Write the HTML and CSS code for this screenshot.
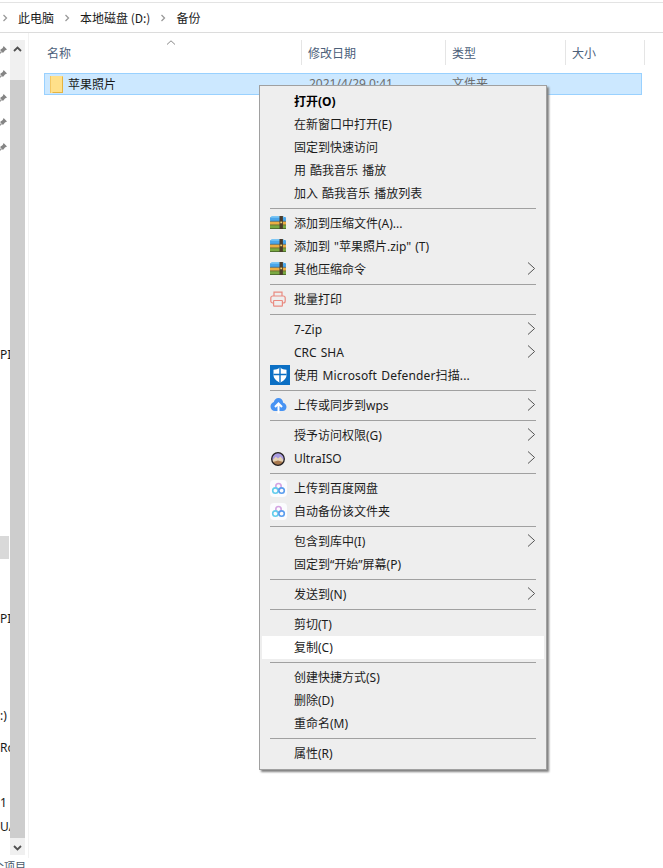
FILE: index.html
```html
<!DOCTYPE html>
<html lang="zh-CN">
<head>
<meta charset="utf-8">
<title>备份</title>
<link rel="stylesheet" href="styles.css">
</head>
<body>
<svg class="defs" width="0" height="0" aria-hidden="true">
  <defs>
    <symbol id="pin" viewBox="0 0 8 8"><path d="M5 0 8 3 6.2 3.9 4.4 6.2 1.8 3.6 4.2 1.8Z" fill="#858585"/><path d="M3.2 4.8 0.4 7.6" stroke="#9a9a9a" stroke-width="1.3" fill="none"/></symbol>
    <symbol id="crumb" viewBox="0 0 6 8"><path d="M1.5 1 4.5 4 1.5 7" fill="none" stroke="#9a9a9a" stroke-width="1.3"/></symbol>
    <symbol id="more" viewBox="0 0 9 13"><path d="M1 0.5 7.6 6.5 1 12.5" fill="none" stroke="#555" stroke-width="1"/></symbol>
    <symbol id="rar" viewBox="0 0 16 14" preserveAspectRatio="none">
      <rect x="0" y="1" width="16" height="4.5" rx="1" fill="#4aa6ea"/>
      <rect x="1" y="0" width="13" height="2" rx="1" fill="#7cc6f4"/>
      <rect x="0" y="5.5" width="16" height="4" fill="#ecae42"/>
      <rect x="0" y="9.5" width="16" height="4" fill="#7aa942"/>
      <rect x="0" y="5.2" width="16" height="0.8" fill="#2c5c80"/>
      <rect x="0" y="9.2" width="16" height="0.8" fill="#6b5a20"/>
      <rect x="0" y="13" width="16" height="1" fill="#4a6a28"/>
      <rect x="9.5" y="0" width="3.4" height="14" fill="#4a3b2a"/>
      <rect x="10.3" y="6" width="1.8" height="1.8" fill="#f0d070"/>
    </symbol>
    <symbol id="baidu" viewBox="0 0 17 17">
      <rect width="17" height="17" rx="4" fill="#fbfcfe"/>
      <circle cx="8.5" cy="6.2" r="2.7" fill="none" stroke="#d3a4e2" stroke-width="1.6"/>
      <circle cx="5.4" cy="10.6" r="2.7" fill="none" stroke="#62cdec" stroke-width="1.6"/>
      <circle cx="11.6" cy="10.6" r="2.7" fill="none" stroke="#5a9dee" stroke-width="1.6"/>
    </symbol>
  </defs>
</svg>

<header class="address">
  <svg class="crumb-sep"><use href="#crumb"/></svg>
  <span class="crumb first">此电脑</span>
  <svg class="crumb-sep"><use href="#crumb"/></svg>
  <span class="crumb">本地磁盘 (D:)</span>
  <svg class="crumb-sep"><use href="#crumb"/></svg>
  <span class="crumb">备份</span>
</header>

<main class="main">
  <nav class="nav">
    <div class="nav-row"><svg class="pin"><use href="#pin"/></svg></div>
    <div class="nav-row"><svg class="pin"><use href="#pin"/></svg></div>
    <div class="nav-row"><svg class="pin"><use href="#pin"/></svg></div>
    <div class="nav-row"><svg class="pin"><use href="#pin"/></svg></div>
    <div class="nav-row"><svg class="pin"><use href="#pin"/></svg></div>
    <div class="nav-row label after-pins">PI</div>
    <div class="nav-row selected after-first"></div>
    <div class="nav-row label after-selected">PI</div>
    <div class="nav-row label after-second">:)</div>
    <div class="nav-row label after-drive">Ro</div>
    <div class="nav-row label after-ro">1</div>
    <div class="nav-row label">UA</div>
  </nav>
  <div class="scrollbar">
    <div class="scroll-up">
      <svg width="9" height="6" viewBox="0 0 9 6"><path d="M1 5 4.5 1.5 8 5" fill="none" stroke="#505050" stroke-width="1.8"/></svg>
    </div>
    <div class="scroll-thumb"></div>
    <div class="scroll-down">
      <svg width="9" height="6" viewBox="0 0 9 6"><path d="M1 1 4.5 4.5 8 1" fill="none" stroke="#505050" stroke-width="1.8"/></svg>
    </div>
  </div>

  <section class="list">
    <div class="list-head">
      <div class="head-cell name">名称
        <svg class="sort" width="10" height="5" viewBox="0 0 10 5"><path d="M1 4.5 5 .8 9 4.5" fill="none" stroke="#8a8a8a" stroke-width="1"/></svg>
      </div>
      <div class="head-cell">修改日期</div>
      <div class="head-cell">类型</div>
      <div class="head-cell">大小</div>
    </div>
    <div class="file-row">
      <div class="file-name">
        <svg class="folder" width="13" height="17" viewBox="0 0 13 17">
          <rect x="0" y="0" width="13" height="17" fill="#ffe08a"/>
          <rect x="0" y="0" width="1" height="17" fill="#f3c763"/>
          <path d="M12 1 13 0V17H2L3 16H12Z" fill="#e5b341"/>
        </svg>
        苹果照片
      </div>
      <div class="file-meta date">2021/4/29 0:41</div>
      <div class="file-meta">文件夹</div>
    </div>
  </section>
</main>

<footer class="status">个项目</footer>

<div class="menu">
  <div class="item strong">打开(O)</div>
  <div class="item">在新窗口中打开(E)</div>
  <div class="item">固定到快速访问</div>
  <div class="item">用 酷我音乐 播放</div>
  <div class="item">加入 酷我音乐 播放列表</div>
  <div class="sep"></div>
  <div class="item"><svg class="icon rar"><use href="#rar"/></svg>添加到压缩文件(A)...</div>
  <div class="item"><svg class="icon rar"><use href="#rar"/></svg>添加到 "苹果照片.zip" (T)</div>
  <div class="item"><svg class="icon rar"><use href="#rar"/></svg>其他压缩命令<svg class="more"><use href="#more"/></svg></div>
  <div class="sep"></div>
  <div class="item">
    <svg class="icon print" viewBox="0 0 16 16" fill="none" stroke="#e98a80" stroke-width="1.2">
      <path d="M4 5V1.2H12V5"/>
      <rect x="0.8" y="5" width="14.4" height="7" rx="2"/>
      <rect x="3.6" y="9.5" width="8.8" height="5.6" rx="0.6" fill="#eeeeee"/>
    </svg>批量打印</div>
  <div class="sep"></div>
  <div class="item">7-Zip<svg class="more"><use href="#more"/></svg></div>
  <div class="item">CRC SHA<svg class="more"><use href="#more"/></svg></div>
  <div class="item">
    <svg class="icon shield" viewBox="0 0 20 20">
      <rect width="20" height="20" fill="#0b6fc4"/>
      <path d="M10 2.5C8 4 6 4.6 3.5 4.8V10C3.5 13.5 6.5 16 10 17.8 13.5 16 16.5 13.5 16.5 10V4.8C14 4.6 12 4 10 2.5Z" fill="#fff"/>
      <path d="M10 2.5V17.8M3.5 9.5H16.5" stroke="#0b6fc4" stroke-width="1.4"/>
    </svg><span class="wide">使用 Microsoft Defender扫描...</span></div>
  <div class="sep"></div>
  <div class="item">
    <svg class="icon cloud" viewBox="0 0 17 17">
      <path d="M8.5 1C6 1 4.2 2.8 3.8 5.1 1.8 5.7 .5 7.5 .5 9.5 .5 12 2.5 14 5 14H12.5C14.8 14 16.5 12.1 16.5 9.9 16.5 7.8 15 6.1 13.2 5.7 12.9 3 10.9 1 8.5 1Z" fill="#4793f3"/>
      <path d="M8.5 16.5V7.5M5 10 8.5 6.5 12 10" fill="none" stroke="#fff" stroke-width="2"/>
    </svg>上传或同步到wps<svg class="more"><use href="#more"/></svg></div>
  <div class="sep"></div>
  <div class="item">授予访问权限(G)<svg class="more"><use href="#more"/></svg></div>
  <div class="item">
    <svg class="icon iso" viewBox="0 0 16 16">
      <circle cx="8" cy="8" r="6.3" fill="#a99ce0"/>
      <path d="M2.2 9.5 5.8 5.8 8 7.4 10.5 5.4 13.8 9.5C13 12.4 10.8 14.3 8 14.3 5.2 14.3 3 12.4 2.2 9.5Z" fill="#e6d2b4"/>
      <path d="M3 11 8 9.6 13 11C12 13 10.2 14.3 8 14.3 5.8 14.3 4 13 3 11Z" fill="#a9794e"/>
      <circle cx="8" cy="8" r="6.3" fill="none" stroke="#231f1f" stroke-width="1.3"/>
    </svg>UltraISO<svg class="more"><use href="#more"/></svg></div>
  <div class="sep"></div>
  <div class="item"><svg class="icon baidu"><use href="#baidu"/></svg>上传到百度网盘</div>
  <div class="item"><svg class="icon baidu"><use href="#baidu"/></svg>自动备份该文件夹</div>
  <div class="sep"></div>
  <div class="item">包含到库中(I)<svg class="more"><use href="#more"/></svg></div>
  <div class="item">固定到“开始”屏幕(P)</div>
  <div class="sep"></div>
  <div class="item">发送到(N)<svg class="more"><use href="#more"/></svg></div>
  <div class="sep"></div>
  <div class="item">剪切(T)</div>
  <div class="item active">复制(C)</div>
  <div class="sep"></div>
  <div class="item">创建快捷方式(S)</div>
  <div class="item">删除(D)</div>
  <div class="item">重命名(M)</div>
  <div class="sep"></div>
  <div class="item">属性(R)</div>
</div>
</body>
</html>
```
FILE: styles.css
```css
* { box-sizing: border-box; }

html, body {
  margin: 0;
  height: 868px;
  overflow: hidden;
  background: #fff;
  color: #1a1a1a;
  font: 12px/16px "Noto Sans", "Noto Sans CJK SC", sans-serif;
}

body {
  position: relative;
  display: flex;
  flex-direction: column;
}

.defs { position: absolute; }

/* address bar */
.address {
  flex: none;
  display: flex;
  align-items: center;
  height: 31px;
  margin-top: 2px;
  padding-left: 2px;
  border-top: 1px solid #e3e3e3;
  border-bottom: 1px solid #dcdcdc;
}

.crumb { margin: 0 10px; font-family: "Noto Sans CJK SC", "Noto Sans", sans-serif; }
.crumb-sep { width: 6px; height: 8px; flex: none; }

/* main area */
.main {
  flex: none;
  display: flex;
  height: 825px;
}

.nav {
  flex: none;
  width: 10px;
  padding-top: 5px;
  overflow: hidden;
  white-space: nowrap;
}

.nav-row {
  display: flex;
  align-items: center;
  height: 24.25px;
}

.pin { width: 9px; height: 9px; margin-left: -2px; }

.label { height: 24px; }
.selected { height: 23px; margin-right: 1px; background: #d9d9d9; }

.after-pins { margin-top: 184px; }
.after-first { margin-top: 169px; }
.after-selected { margin-top: 48px; }
.after-second { margin-top: 73px; }
.after-drive { margin-top: 8px; }
.after-ro { margin-top: 31px; }

.scrollbar {
  flex: none;
  display: flex;
  flex-direction: column;
  width: 15px;
  margin: 7px 3px 3px 0;
  background: #f0f0f0;
}

.scroll-up {
  flex: none;
  display: flex;
  justify-content: center;
  height: 40px;
  padding-top: 6px;
}

.scroll-thumb { flex: 1; background: #cdcdcd; }

.scroll-down {
  flex: none;
  display: flex;
  justify-content: center;
  height: 17px;
  padding-top: 7px;
}

/* file list */
.list {
  flex: 1;
  padding: 7px 0 0 15px;
  border-left: 1px solid #f2f2f2;
}

.list-head {
  display: grid;
  grid-template-columns: 257px 144px 120px 80px;
  height: 25px;
  color: #4c607a;
}

.head-cell {
  position: relative;
  display: flex;
  align-items: center;
  padding: 1px 0 0 6px;
  border-left: 1px solid #e5e5e5;
  font-family: "Noto Sans CJK SC", "Noto Sans", sans-serif;
}

.head-cell:last-child { border-right: 1px solid #e5e5e5; }
.head-cell.name { padding-left: 3px; border-left: 0; }

.sort { position: absolute; left: 122px; top: 0; }

.file-row {
  display: grid;
  grid-template-columns: 257px 144px 120px;
  width: 598px;
  height: 22px;
  margin-top: 8px;
  background: #cce8ff;
  border: 1px solid #99d1ff;
}

.file-name {
  display: flex;
  align-items: center;
  gap: 5px;
  padding-left: 5px;
  font-family: "Noto Sans CJK SC", "Noto Sans", sans-serif;
}

.file-meta {
  display: flex;
  align-items: center;
  padding-left: 6px;
  color: #6d6d6d;
}

.date { padding-left: 7px; }

/* status */
.status {
  flex: none;
  height: 10px;
  margin-left: -7px;
  color: #4a5a6a;
  font-size: 11px;
  overflow: hidden;
  font-family: "Noto Sans CJK SC", sans-serif;
}

/* context menu */
.menu {
  position: absolute;
  left: 259px;
  top: 85px;
  width: 288px;
  padding: 4px 2px;
  background: #eeeeee;
  border: 1px solid #a0a0a0;
  box-shadow: 2px 2px 2px #808080;
  color: #1c1c1c;
  font-family: "Noto Sans", "Noto Sans CJK SC", sans-serif;
  font-size: 12px;
  word-spacing: 1px;
}

.item {
  position: relative;
  display: flex;
  align-items: center;
  height: 23px;
  padding: 0 8px 0 32px;
  white-space: pre;
}

.item.strong { font-weight: 700; color: #000; }
.item.active { background: #fff; }

.wide { letter-spacing: 0.15px; }

.sep {
  height: 1px;
  margin: 3px 8px;
  background: #a0a0a0;
}

.more {
  width: 9px;
  height: 13px;
  margin: -2px 0 0 auto;
  flex: none;
}

.icon { position: absolute; }
.rar { left: 8px; top: 4px; width: 16px; height: 13px; }
.print { left: 8px; top: 3px; width: 16px; height: 16px; }
.shield { left: 8px; top: 1px; width: 20px; height: 20px; }
.cloud { left: 8px; top: 3px; width: 17px; height: 17px; }
.iso { left: 8px; top: 4px; width: 16px; height: 16px; }
.baidu { left: 8px; top: 3px; width: 17px; height: 17px; }
```
